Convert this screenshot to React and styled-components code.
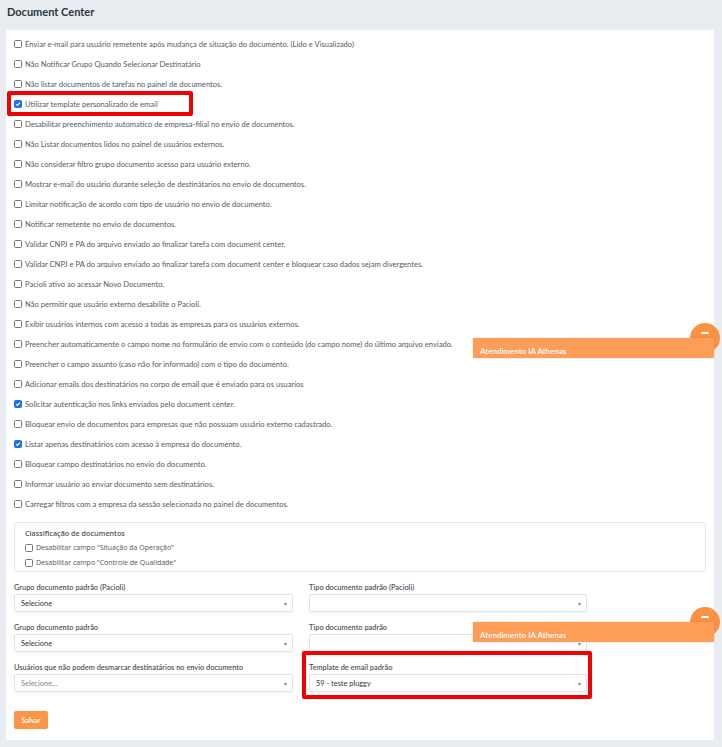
import styled, { createGlobalStyle } from "styled-components";

const GlobalStyle = createGlobalStyle`
  html, body {
    margin: 0;
    padding: 0;
    background: #e9edf2;
    font-family: Lato, "Liberation Sans", sans-serif;
  }
`;

const Page = styled.div`
  width: 722px;
  height: 747px;
  padding: 0 8px 0 6px;
  box-sizing: border-box;
  position: relative;
  overflow: hidden;
`;

const Title = styled.h1`
  margin: 0;
  padding: 5px 1px 0;
  height: 30px;
  box-sizing: border-box;
  font-size: 11px;
  font-weight: 700;
  color: #2c3440;
`;

const Card = styled.div`
  background: #fff;
  height: 710px;
  padding: 4px 8px 0;
  box-sizing: border-box;
  border-radius: 2px;
`;

const List = styled.div`
  display: flex;
  flex-direction: column;
`;

const Mark = styled.span`
  position: absolute;
  pointer-events: none;
  border: 4px solid #f50000;
  border-radius: 2px;
  left: ${(p) => p.$l}px;
  right: ${(p) => p.$r}px;
  top: ${(p) => p.$t}px;
  bottom: ${(p) => p.$b}px;
`;

const Row = styled.label`
  position: relative;
  display: flex;
  align-items: center;
  gap: 3px;
  height: 20px;
  font-size: 7.6px;
  color: #555b63;
  width: fit-content;
`;

const Box = styled.span`
  width: 6px;
  height: 6px;
  border: 0.8px solid #777;
  border-radius: 1.5px;
  display: inline-flex;
  align-items: center;
  justify-content: center;
  flex-shrink: 0;
  background: ${(p) => (p.$on ? "#1a73e8" : "#fff")};
  border-color: ${(p) => (p.$on ? "#1a73e8" : "#777")};
`;

const Check = ({ on }) => (
  <Box $on={on}>
    {on && (
      <svg width="6" height="6" viewBox="0 0 10 10">
        <path d="M2 5.2 L4.2 7.4 L8.2 2.8" stroke="#fff" strokeWidth="1.8" fill="none" />
      </svg>
    )}
  </Box>
);

const Fieldset = styled.div`
  margin: 8px 0 0;
  border: 1px solid #e6e8eb;
  border-radius: 2px;
  height: 50px;
  box-sizing: border-box;
  padding: 4px 10px 0;
  font-family: "Open Sans", sans-serif;
`;

const FieldTitle = styled.div`
  font-size: 7.2px;
  font-weight: 600;
  color: #555;
  height: 13px;
  line-height: 13px;
`;

const SmallRow = styled.div`
  display: flex;
  align-items: center;
  gap: 3px;
  height: 15px;
  font-size: 7px;
  color: #555;
`;

const Grid = styled.div`
  display: grid;
  grid-template-columns: 279px 278px;
  column-gap: 16px;
  margin-top: 9px;
`;

const Field = styled.div`
  position: relative;
  display: flex;
  flex-direction: column;
  height: 40px;
`;

const Label = styled.div`
  font-size: 7.4px;
  font-weight: 600;
  color: #4c535c;
  height: 13px;
  line-height: 14px;
`;

const Select = styled.div`
  height: 18px;
  border: 1px solid #dfe2e6;
  border-radius: 2px;
  box-sizing: border-box;
  display: flex;
  align-items: center;
  justify-content: space-between;
  padding: 0 5px 0 6px;
  font-size: 7.4px;
  color: ${(p) => (p.$placeholder ? "#888" : "#333")};
  box-shadow: 0 1px 1px rgba(0, 0, 0, 0.04);
`;

const Caret = styled.span`
  font-size: 6px;
  color: #888;
`;

const SaveButton = styled.button`
  margin-top: 10px;
  width: 34px;
  height: 18px;
  border: none;
  border-radius: 2px;
  background: #fd9446;
  color: #fff;
  font-family: Lato, sans-serif;
  font-size: 7px;
  font-weight: 700;
  padding: 0;
`;

const Widget = styled.div`
  position: absolute;
  left: 473px;
  top: ${(p) => p.$top}px;
  width: 241px;
  height: 20px;
`;

const Bubble = styled.div`
  position: absolute;
  right: -6px;
  top: -15px;
  width: 30px;
  height: 30px;
  border-radius: 50%;
  background: #fb9243;
  display: flex;
  justify-content: center;
  padding-top: 9px;
  box-sizing: border-box;
  &::before {
    content: "";
    width: 8px;
    height: 2px;
    background: #fff;
    border-radius: 1px;
  }
`;

const Panel = styled.div`
  position: absolute;
  inset: 0;
  background: #fd9d57;
  color: #fff;
  font-size: 8px;
  font-weight: 600;
  display: flex;
  align-items: flex-end;
  padding: 0 0 2px 7px;
  box-sizing: border-box;
  box-shadow: 0 0 2px rgba(0, 0, 0, 0.15);
`;

const options = [
  ["Enviar e-mail para usuário remetente após mudança de situação do documento. (Lido e Visualizado)"],
  ["Não Notificar Grupo Quando Selecionar Destinatário"],
  ["Não listar documentos de tarefas no painel de documentos."],
  ["Utilizar template personalizado de email", true, true],
  ["Desabilitar preenchimento automatico de empresa-filial no envio de documentos."],
  ["Não Listar documentos lidos no painel de usuários externos."],
  ["Não considerar filtro grupo documento acesso para usuário externo."],
  ["Mostrar e-mail do usuário durante seleção de destinátarios no envio de documentos."],
  ["Limitar notificação de acordo com tipo de usuário no envio de documento."],
  ["Notificar remetente no envio de documentos."],
  ["Validar CNPJ e PA do arquivo enviado ao finalizar tarefa com document center."],
  ["Validar CNPJ e PA do arquivo enviado ao finalizar tarefa com document center e bloquear caso dados sejam divergentes."],
  ["Pacioli ativo ao acessar Novo Documento."],
  ["Não permitir que usuário externo desabilite o Pacioli."],
  ["Exibir usuários internos com acesso a todas as empresas para os usuários externos."],
  ["Preencher automaticamente o campo nome no formulário de envio com o conteúdo (do campo nome) do último arquivo enviado."],
  ["Preencher o campo assunto (caso não for informado) com o tipo do documento."],
  ["Adicionar emails dos destinatários no corpo de email que é enviado para os usuarios"],
  ["Solicitar autenticação nos links enviados pelo document center.", true],
  ["Bloquear envio de documentos para empresas que não possuam usuário externo cadastrado."],
  ["Listar apenas destinatários com acesso à empresa do documento.", true],
  ["Bloquear campo destinatários no envio do documento."],
  ["Informar usuário ao enviar documento sem destinatários."],
  ["Carregar filtros com a empresa da sessão selecionada no painel de documentos."],
];

const fields = [
  ["Grupo documento padrão (Pacioli)", "Selecione"],
  ["Tipo documento padrão (Pacioli)", ""],
  ["Grupo documento padrão", "Selecione"],
  ["Tipo documento padrão", ""],
  ["Usuários que não podem desmarcar destinatários no envio documento", "Selecione...", false, true],
  ["Template de email padrão", "59 - teste pluggy", true],
];

export default function App() {
  return (
    <>
      <GlobalStyle />
      <Page>
        <Title>Document Center</Title>
        <Card>
          <List>
            {options.map(([text, on, hl]) => (
              <Row key={text}>
                <Check on={on} />
                {text}
                {hl && <Mark $l={-7} $r={-35} $t={-3} $b={-2} />}
              </Row>
            ))}
          </List>
          <Fieldset>
            <FieldTitle>Classificação de documentos</FieldTitle>
            <SmallRow>
              <Check />
              Desabilitar campo "Situação da Operação"
            </SmallRow>
            <SmallRow>
              <Check />
              Desabilitar campo "Controle de Qualidade"
            </SmallRow>
          </Fieldset>
          <Grid>
            {fields.map(([label, value, hl, ph]) => (
              <Field key={label}>
                <Label>{label}</Label>
                <Select $placeholder={ph}>
                  <span>{value}</span>
                  <Caret>▾</Caret>
                </Select>
                {hl && <Mark $l={-7} $r={-5} $t={-10} $b={2} />}
              </Field>
            ))}
          </Grid>
          <SaveButton>Salvar</SaveButton>
        </Card>
        <Widget $top={338}>
          <Bubble />
          <Panel>Atendimento IA Athenas</Panel>
        </Widget>
        <Widget $top={622}>
          <Bubble />
          <Panel>Atendimento IA Athenas</Panel>
        </Widget>
      </Page>
    </>
  );
}
